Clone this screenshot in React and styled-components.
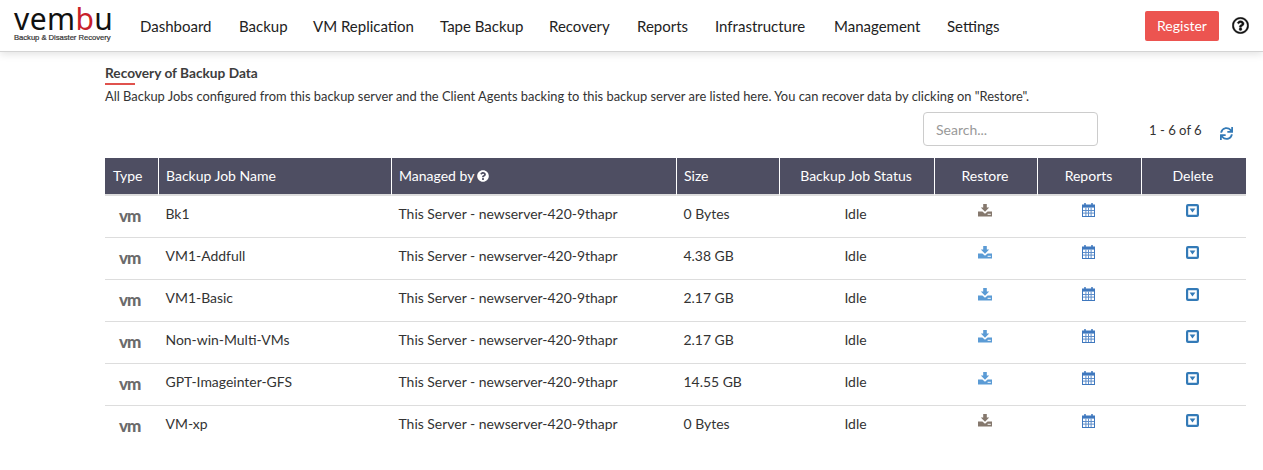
import React from 'react'
import styled, { createGlobalStyle } from 'styled-components'
import { FaSync, FaQuestionCircle, FaRegQuestionCircle } from 'react-icons/fa'

const GlobalStyle = createGlobalStyle`
  html, body { margin: 0; padding: 0; background: #fff; }
  body { font-family: Lato, "Open Sans", sans-serif; color: #333; overflow: hidden; }
`

const Header = styled.header`
  height: 51px;
  display: flex;
  align-items: center;
  background: #fff;
  border-bottom: 1px solid #d4d4d4;
  box-shadow: 0 2px 8px rgba(0, 0, 0, 0.12);
`

const Logo = styled.div`
  width: 98px;
  margin-left: 14px;
  padding-bottom: 2px;
  display: flex;
  flex-direction: column;
`

const LogoMark = styled.div`
  font-family: "Noto Sans", sans-serif;
  font-size: 30px;
  line-height: 24px;
  letter-spacing: 0.4px;
  color: #111;
  white-space: nowrap;
  span { color: #c8202a; }
`

const LogoTag = styled.div`
  margin-top: 2px;
  font-family: "Liberation Sans", sans-serif;
  font-size: 7.7px;
  line-height: 10px;
  letter-spacing: -0.05px;
  -webkit-text-stroke: 0.2px #333;
  color: #333;
  white-space: nowrap;
`

const Nav = styled.nav`
  margin-left: 28px;
  display: flex;
  gap: 26px;
  flex: 1;
`

const NavLink = styled.a`
  width: ${p => p.$width}px;
  font-size: 15px;
  color: #222;
  white-space: nowrap;
`

const RegisterButton = styled.button`
  width: 74px;
  height: 30px;
  border: 0;
  border-radius: 2px;
  background: #ec5450;
  color: #fff;
  font: 14px Lato, sans-serif;
  padding: 0;
`

const HelpIcon = styled(FaRegQuestionCircle)`
  margin: 0 14px 0 13px;
  width: 17px;
  height: 17px;
  color: #111;
  stroke: #111;
  stroke-width: 12px;
`

const Main = styled.main`
  padding: 12px 17px 0 105px;
`

const Title = styled.h1`
  margin: 0;
  font-size: 13.7px;
  line-height: 17px;
  font-weight: 700;
  color: #3d3d3d;
`

const TitleRule = styled.div`
  width: 30px;
  height: 2px;
  margin-top: 2px;
  background: #e0524d;
`

const Description = styled.p`
  margin: 3px 0 0;
  font-size: 12.9px;
  line-height: 17px;
  color: #333;
  white-space: nowrap;
`

const Toolbar = styled.div`
  height: 34px;
  margin-top: 7px;
  display: flex;
  align-items: center;
  justify-content: flex-end;
`

const SearchInput = styled.input`
  box-sizing: border-box;
  width: 175px;
  height: 34px;
  padding: 0 12px;
  border: 1px solid #ccc;
  border-radius: 4px;
  font: 14px Lato, sans-serif;
  &::placeholder { color: #999; }
`

const PageCount = styled.span`
  margin: 2px 0 0 51px;
  width: 53px;
  font-size: 13.1px;
  color: #333;
  white-space: nowrap;
`

const RefreshIcon = styled(FaSync)`
  margin: 9px 13px 0 18px;
  width: 13px;
  height: 13px;
  color: #337ab7;
`

const Table = styled.table`
  width: 1141px;
  margin-top: 12px;
  border-collapse: separate;
  border-spacing: 0;
  table-layout: fixed;
`

const HeadCell = styled.th`
  box-sizing: border-box;
  height: 38px;
  padding: 0 ${p => (p.$center ? '2px' : p.$first ? '8px' : '7px')} 2px ${p => (p.$center ? 0 : p.$first ? '8px' : '7px')};
  background: #4e4e62;
  border-left: ${p => (p.$first ? 0 : '1px solid #fff')};
  border-bottom: 2px solid #ddd;
  color: #fff;
  font-size: 14px;
  font-weight: 400;
  text-align: ${p => (p.$center ? 'center' : 'left')};
  white-space: nowrap;
`

const HeadHelp = styled(FaQuestionCircle)`
  width: 12px;
  height: 12px;
  margin-left: 3px;
  vertical-align: -1px;
`

const Row = styled.tr`
  &:not(:last-child) td { border-bottom: 1px solid #ddd; }
`

const Cell = styled.td`
  box-sizing: border-box;
  height: 42px;
  padding: 0 ${p => (p.$center ? '2px' : 0)} 7px ${p => (p.$center ? 0 : '7.5px')};
  font-size: 13.95px;
  color: #333;
  text-align: ${p => (p.$center ? 'center' : 'left')};
  white-space: nowrap;
`

const VmMark = styled.span`
  display: block;
  padding: 4px 0 0 6.5px;
  font-size: 17px;
  line-height: 17px;
  font-weight: 900;
  letter-spacing: -1px;
  color: #6b6b6b;
`

const IconSvg = styled.svg`
  display: block;
  margin: 0 auto 6px;
  color: ${p => p.$color};
`

function DownloadIcon({ active }) {
  return (
    <IconSvg width="14" height="13" viewBox="0 0 14 13" $color={active ? '#5b9bd5' : '#85786d'}>
      <path fill="currentColor" d="M5.2 0h3.6v3.6h2.4L7 7.8 2.8 3.6h2.4z" />
      <path fill="currentColor" d="M0 7.4h4.4L7 9.8l2.6-2.4H14V12.6H0z" />
      <rect x="9.6" y="9.8" width="3.2" height="1" fill="#fff" />
    </IconSvg>
  )
}

function CalendarIcon() {
  return (
    <IconSvg width="13" height="14" viewBox="0 0 13 14" $color="#3f78be">
      <path fill="currentColor" d="M0 1.6h2.2V0.6a.8.8 0 0 1 1.6 0v1h5.4v-1a.8.8 0 0 1 1.6 0v1H13V14H0z" />
      <rect x="1" y="4.6" width="11" height="8.4" fill="#fff" />
      {[7, 9.6].map(y => <rect key={y} x="1" y={y} width="11" height="1" fill="#5f8fcb" />)}
      {[3.4, 6, 8.6].map(x => <rect key={x} x={x} y="4.6" width="1" height="8.4" fill="#5f8fcb" />)}
    </IconSvg>
  )
}

function DeleteIcon() {
  return (
    <IconSvg width="13" height="13" viewBox="0 0 13 13" $color="#337ab7">
      <path fill="currentColor" fillRule="evenodd" d="M2 0h9a2 2 0 0 1 2 2v9a2 2 0 0 1-2 2H2a2 2 0 0 1-2-2V2a2 2 0 0 1 2-2zM2.2 2.2v8.6h8.6V2.2z" />
      <path fill="currentColor" d="M3.6 4.6h5.8L6.5 8.4z" />
    </IconSvg>
  )
}

const navItems = [
  { label: 'Dashboard', width: 73 },
  { label: 'Backup', width: 48 },
  { label: 'VM Replication', width: 101 },
  { label: 'Tape Backup', width: 83 },
  { label: 'Recovery', width: 62 },
  { label: 'Reports', width: 52 },
  { label: 'Infrastructure', width: 93 },
  { label: 'Management', width: 87 },
  { label: 'Settings', width: 53 },
]

const jobs = [
  { name: 'Bk1', size: '0 Bytes', active: false },
  { name: 'VM1-Addfull', size: '4.38 GB', active: true },
  { name: 'VM1-Basic', size: '2.17 GB', active: true },
  { name: 'Non-win-Multi-VMs', size: '2.17 GB', active: true },
  { name: 'GPT-Imageinter-GFS', size: '14.55 GB', active: true },
  { name: 'VM-xp', size: '0 Bytes', active: false },
]

const widths = [53, 233, 285, 103, 155, 103, 104, 105]

export default function App() {
  return (
    <>
      <GlobalStyle />
      <Header>
        <Logo>
          <LogoMark>vem<span>b</span>u</LogoMark>
          <LogoTag>Backup &amp; Disaster Recovery</LogoTag>
        </Logo>
        <Nav>
          {navItems.map(item => <NavLink key={item.label} $width={item.width}>{item.label}</NavLink>)}
        </Nav>
        <RegisterButton>Register</RegisterButton>
        <HelpIcon />
      </Header>
      <Main>
        <Title>Recovery of Backup Data</Title>
        <TitleRule />
        <Description>All Backup Jobs configured from this backup server and the Client Agents backing to this backup server are listed here. You can recover data by clicking on "Restore".</Description>
        <Toolbar>
          <SearchInput placeholder="Search..." />
          <PageCount>1 - 6 of 6</PageCount>
          <RefreshIcon />
        </Toolbar>
        <Table>
          <colgroup>
            {widths.map((w, i) => <col key={i} width={w} />)}
          </colgroup>
          <thead>
            <tr>
              <HeadCell $first>Type</HeadCell>
              <HeadCell>Backup Job Name</HeadCell>
              <HeadCell>Managed by<HeadHelp /></HeadCell>
              <HeadCell>Size</HeadCell>
              <HeadCell $center>Backup Job Status</HeadCell>
              <HeadCell $center>Restore</HeadCell>
              <HeadCell $center>Reports</HeadCell>
              <HeadCell $center>Delete</HeadCell>
            </tr>
          </thead>
          <tbody>
            {jobs.map(job => (
              <Row key={job.name}>
                <Cell><VmMark>vm</VmMark></Cell>
                <Cell>{job.name}</Cell>
                <Cell>This Server - newserver-420-9thapr</Cell>
                <Cell>{job.size}</Cell>
                <Cell $center>Idle</Cell>
                <Cell $center><DownloadIcon active={job.active} /></Cell>
                <Cell $center><CalendarIcon /></Cell>
                <Cell $center><DeleteIcon /></Cell>
              </Row>
            ))}
          </tbody>
        </Table>
      </Main>
    </>
  )
}
